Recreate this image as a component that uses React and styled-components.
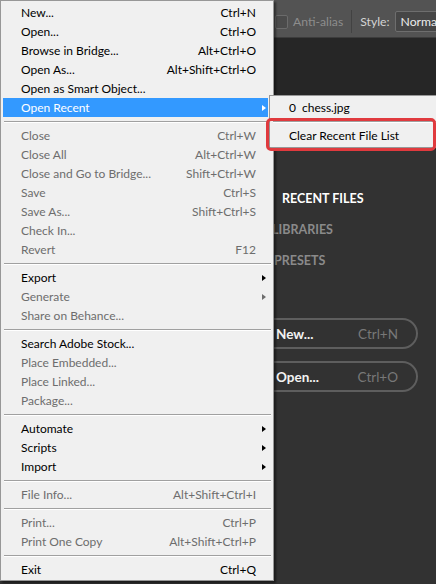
import React from 'react';
import styled, { createGlobalStyle } from 'styled-components';

const Global = createGlobalStyle`
  html, body { margin: 0; padding: 0; background: #323232; }
  body { width: 436px; height: 584px; overflow: hidden; font-family: Lato, "Liberation Sans", sans-serif; }
  #root { width: 436px; height: 584px; }
`;

const Screen = styled.div`
  position: relative;
  width: 436px;
  height: 584px;
  overflow: hidden;
  display: flex;
  flex-direction: column;
  background: #323232;
`;

/* ---------- Photoshop options bar ---------- */
const OptionsBar = styled.div`
  flex: 0 0 38px;
  box-sizing: border-box;
  background: #535353;
  border-bottom: 1px solid #3c3c3c;
  padding: 6px 0 0 275px;
  display: flex;
  align-items: center;
  font-size: 12.2px;
  white-space: nowrap;
`;

const CheckBox = styled.span`
  flex: 0 0 auto;
  width: 11px;
  height: 12px;
  border: 1px solid #6b6b6b;
  border-radius: 2px;
  background: #4b4b4b;
  margin-right: 5px;
`;

const BarLabel = styled.span`
  flex: 0 0 auto;
  color: ${p => (p.$dim ? '#8d8d8d' : '#d4d4d4')};
  margin-right: ${p => p.$gap || 0}px;
`;

const BarDivider = styled.span`
  flex: 0 0 1px;
  height: 23px;
  background: #424242;
  margin: 0 8px 0 8px;
`;

const SelectBox = styled.span`
  box-sizing: border-box;
  height: 21px;
  flex: 0 0 80px;
  border: 1px solid #6e6e6e;
  border-radius: 2px;
  background: #464646;
  color: #ececec;
  padding-left: 5px;
  display: flex;
  align-items: center;
`;

/* ---------- workspace ---------- */
const DocBand = styled.div`
  flex: 0 0 112px;
  background: #262626;
`;

const StartArea = styled.div`
  flex: 1;
  display: flex;
  flex-direction: column;
  padding-top: 33px;
  background: #323232;
`;

const NavItem = styled.div`
  height: 31px;
  line-height: 31px;
  padding-left: ${p => p.$indent}px;
  font-size: 12.5px;
  font-weight: 700;
  color: ${p => (p.$active ? '#ffffff' : '#8a8a8a')};
`;

const Pills = styled.div`
  margin-top: 42px;
  padding-left: 230px;
  display: flex;
  flex-direction: column;
  gap: 12px;
`;

const Pill = styled.div`
  box-sizing: border-box;
  width: 188px;
  height: 31px;
  border: 2px solid #5e5e5e;
  border-radius: 16px;
  padding: 0 18px 0 44px;
  display: flex;
  align-items: center;
  justify-content: space-between;
  font-size: 13.5px;
`;

const PillLabel = styled.span`
  color: #f2f2f2;
  font-weight: 700;
`;

const PillKey = styled.span`
  color: #787878;
`;

/* ---------- Windows menu ---------- */
const Menu = styled.div`
  position: absolute;
  left: 0;
  top: 0;
  width: 274px;
  box-sizing: border-box;
  background: #f0f0f0;
  border: 1px solid #979797;
  padding: 2px 0 1px 0;
  box-shadow: 2px 2px 2px rgba(0, 0, 0, 0.45);
  font-size: 12px;
`;

const Row = styled.div`
  height: 19px;
  margin: 0 5px 0 2px;
  padding-left: 18px;
  display: grid;
  grid-template-columns: 1fr auto 12px;
  align-items: center;
  background: ${p => (p.$hot ? '#3399ff' : 'transparent')};
  color: ${p => (p.$hot ? '#ffffff' : p.$off ? '#6d6d6d' : '#000000')};
  white-space: nowrap;
`;

const ArrowCell = styled.span`
  display: flex;
  padding-left: 6px;
`;

const Arrow = styled.span`
  width: 0;
  height: 0;
  border-left: 4px solid currentColor;
  border-top: 3.5px solid transparent;
  border-bottom: 3.5px solid transparent;
`;

const Sep = styled.div`
  height: 0;
  margin: 4px 2px 3px 3px;
  border-top: 1px solid #a0a0a0;
  border-bottom: 1px solid #ffffff;
`;

const SubMenu = styled.div`
  position: absolute;
  left: 269px;
  top: 95px;
  width: 180px;
  box-sizing: border-box;
  background: #f0f0f0;
  border: 1px solid #979797;
  padding: 2px 0;
  font-size: 12px;
`;

const SubRow = styled.div`
  height: 19px;
  margin: 0 5px 0 2px;
  padding-left: 17px;
  display: flex;
  align-items: center;
  color: #000;
  white-space: nowrap;
`;

const Num = styled.span`
  margin-right: 6px;
`;

const Callout = styled.div`
  position: absolute;
  left: 266px;
  top: 118px;
  width: 170px;
  height: 33px;
  box-sizing: border-box;
  border: 3px solid #e03a3e;
  border-radius: 5px;
`;

const groups = [
  [
    { t: 'New...', k: 'Ctrl+N' },
    { t: 'Open...', k: 'Ctrl+O' },
    { t: 'Browse in Bridge...', k: 'Alt+Ctrl+O' },
    { t: 'Open As...', k: 'Alt+Shift+Ctrl+O' },
    { t: 'Open as Smart Object...' },
    { t: 'Open Recent', sub: true, hot: true },
  ],
  [
    { t: 'Close', k: 'Ctrl+W', off: true },
    { t: 'Close All', k: 'Alt+Ctrl+W', off: true },
    { t: 'Close and Go to Bridge...', k: 'Shift+Ctrl+W', off: true },
    { t: 'Save', k: 'Ctrl+S', off: true },
    { t: 'Save As...', k: 'Shift+Ctrl+S', off: true },
    { t: 'Check In...', off: true },
    { t: 'Revert', k: 'F12', off: true },
  ],
  [
    { t: 'Export', sub: true },
    { t: 'Generate', sub: true, off: true },
    { t: 'Share on Behance...', off: true },
  ],
  [
    { t: 'Search Adobe Stock...' },
    { t: 'Place Embedded...', off: true },
    { t: 'Place Linked...', off: true },
    { t: 'Package...', off: true },
  ],
  [
    { t: 'Automate', sub: true },
    { t: 'Scripts', sub: true },
    { t: 'Import', sub: true },
  ],
  [{ t: 'File Info...', k: 'Alt+Shift+Ctrl+I', off: true }],
  [
    { t: 'Print...', k: 'Ctrl+P', off: true },
    { t: 'Print One Copy', k: 'Alt+Shift+Ctrl+P', off: true },
  ],
  [{ t: 'Exit', k: 'Ctrl+Q' }],
];

export default function App() {
  return (
    <Screen>
      <Global />
      <OptionsBar>
        <CheckBox />
        <BarLabel $dim>Anti-alias</BarLabel>
        <BarDivider />
        <BarLabel $gap={5}>Style:</BarLabel>
        <SelectBox>Normal</SelectBox>
      </OptionsBar>
      <DocBand />
      <StartArea>
        <NavItem $active $indent={282}>RECENT FILES</NavItem>
        <NavItem $indent={272}>LIBRARIES</NavItem>
        <NavItem $indent={274}>PRESETS</NavItem>
        <Pills>
          <Pill>
            <PillLabel>New...</PillLabel>
            <PillKey>Ctrl+N</PillKey>
          </Pill>
          <Pill>
            <PillLabel>Open...</PillLabel>
            <PillKey>Ctrl+O</PillKey>
          </Pill>
        </Pills>
      </StartArea>

      <Menu>
        {groups.map((g, gi) => (
          <React.Fragment key={gi}>
            {gi > 0 && <Sep />}
            {g.map(it => (
              <Row key={it.t} $hot={it.hot} $off={it.off}>
                <span>{it.t}</span>
                <span>{it.k || ''}</span>
                <ArrowCell>{it.sub && <Arrow />}</ArrowCell>
              </Row>
            ))}
          </React.Fragment>
        ))}
      </Menu>

      <SubMenu>
        <SubRow>
          <Num>0</Num>chess.jpg
        </SubRow>
        <Sep />
        <SubRow>Clear Recent File List</SubRow>
      </SubMenu>
      <Callout />
    </Screen>
  );
}
